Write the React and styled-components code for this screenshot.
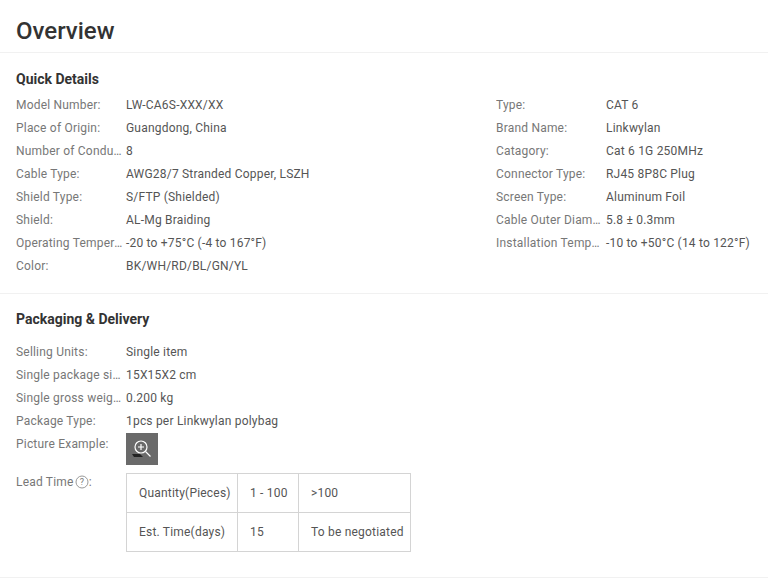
import React from "react";
import styled, { createGlobalStyle } from "styled-components";

const Global = createGlobalStyle`
  html, body { margin: 0; padding: 0; background: #fff; }
  body { font-family: Roboto, "Liberation Sans", sans-serif; color: #555; overflow: hidden; }
`;
const Page = styled.div`
  width: 768px;
  height: 582px;
  overflow: hidden;
`;
const Title = styled.h1`
  margin: 0;
  padding: 16px 16px 0;
  height: 36px;
  font-size: 24px;
  line-height: 31px;
  font-weight: 500;
  color: #333;
  border-bottom: 1px solid #f1f1f1;
`;
const Section = styled.section`
  padding: ${(p) => p.$top}px 0 0 16px;
  height: ${(p) => p.$height}px;
  box-sizing: border-box;
  border-bottom: ${(p) => (p.$divider ? "1px solid #f1f1f1" : "none")};
`;
const Heading = styled.h2`
  margin: 0 0 5px;
  font-size: 14px;
  line-height: 20px;
  font-weight: 700;
  color: #333;
`;
const Columns = styled.div`
  display: grid;
  grid-template-columns: 480px 272px;
`;
const Row = styled.div`
  display: flex;
  height: 23px;
  font-size: 12px;
  line-height: 23px;
  letter-spacing: 0.2px;
`;
const Label = styled.div`
  width: 110px;
  flex: none;
  color: #777;
  white-space: nowrap;
  overflow: hidden;
  text-overflow: ellipsis;
`;
const Value = styled.div`
  color: #555;
  white-space: nowrap;
`;
const Thumb = styled.div`
  width: 32px;
  height: 32px;
  background: #6a6a6a;
  display: flex;
  align-items: center;
  justify-content: center;
`;
const PictureRow = styled(Row)`
  height: 38px;
`;
const LeadRow = styled(Row)`
  height: auto;
`;
const Help = styled.svg`
  width: 14px;
  height: 14px;
  margin: 0 0 -3px 1px;
`;
const LeadLabel = styled.div`
  width: 110px;
  flex: none;
  color: #777;
  white-space: nowrap;
`;
const Table = styled.table`
  border-collapse: collapse;
  margin-top: 2px;
  font-size: 12px;
  color: #555;
`;
const Cell = styled.td`
  border: 1px solid #d4d4d4;
  height: 39px;
  width: ${(p) => p.$w}px;
  padding: 0 0 0 12px;
  box-sizing: border-box;
  white-space: nowrap;
  line-height: 16px;
`;

const left = [
  ["Model Number:", "LW-CA6S-XXX/XX"],
  ["Place of Origin:", "Guangdong, China"],
  ["Number of Conductors:", "8"],
  ["Cable Type:", "AWG28/7 Stranded Copper, LSZH"],
  ["Shield Type:", "S/FTP (Shielded)"],
  ["Shield:", "AL-Mg Braiding"],
  ["Operating Temperature:", "-20 to +75°C (-4 to 167°F)"],
  ["Color:", "BK/WH/RD/BL/GN/YL"],
];
const right = [
  ["Type:", "CAT 6"],
  ["Brand Name:", "Linkwylan"],
  ["Catagory:", "Cat 6 1G 250MHz"],
  ["Connector Type:", "RJ45 8P8C Plug"],
  ["Screen Type:", "Aluminum Foil"],
  ["Cable Outer Diameter:", "5.8 ± 0.3mm"],
  ["Installation Temperature:", "-10 to +50°C (14 to 122°F)"],
];
const pack = [
  ["Selling Units:", "Single item"],
  ["Single package size:", "15X15X2 cm"],
  ["Single gross weight:", "0.200 kg"],
  ["Package Type:", "1pcs per Linkwylan polybag"],
];

const Rows = ({ items }) => (
  <div>
    {items.map(([k, v]) => (
      <Row key={k}>
        <Label>{k}</Label>
        <Value>{v}</Value>
      </Row>
    ))}
  </div>
);

export default function App() {
  return (
    <Page>
      <Global />
      <Title>Overview</Title>
      <Section $top={16} $height={241} $divider>
        <Heading>Quick Details</Heading>
        <Columns>
          <Rows items={left} />
          <Rows items={right} />
        </Columns>
      </Section>
      <Section $top={15} $height={284} $divider>
        <Heading as="h2" style={undefined}>Packaging &amp; Delivery</Heading>
        <div style={undefined}>
          <Spacer />
          <Rows items={pack} />
          <PictureRow>
            <Label>Picture Example:</Label>
            <Thumb>
              <svg width="22" height="22" viewBox="0 0 22 22" fill="none" stroke="#fff" strokeWidth="1.2">
                <path d="M1 16h8l3 3H3z" fill="#222" stroke="none" />
                <circle cx="10" cy="9" r="6" />
                <path d="M10 6v6M7 9h6M14.5 13.5l5 5" />
              </svg>
            </Thumb>
          </PictureRow>
          <LeadRow>
            <LeadLabel>
              Lead Time
              <Help viewBox="0 0 14 14" fill="none">
                <circle cx="7" cy="7" r="6" stroke="#999" />
                <text x="7" y="10" textAnchor="middle" fontSize="9" fill="#777" fontFamily="Roboto, sans-serif">?</text>
              </Help>
              :
            </LeadLabel>
            <Table>
              <tbody>
                <tr>
                  <Cell $w={111}>Quantity(Pieces)</Cell>
                  <Cell $w={61}>1 - 100</Cell>
                  <Cell $w={112}>&gt;100</Cell>
                </tr>
                <tr>
                  <Cell $w={111}>Est. Time(days)</Cell>
                  <Cell $w={61}>15</Cell>
                  <Cell $w={112}>To be negotiated</Cell>
                </tr>
              </tbody>
            </Table>
          </LeadRow>
        </div>
      </Section>
    </Page>
  );
}

const Spacer = styled.div`
  height: 7px;
`;
